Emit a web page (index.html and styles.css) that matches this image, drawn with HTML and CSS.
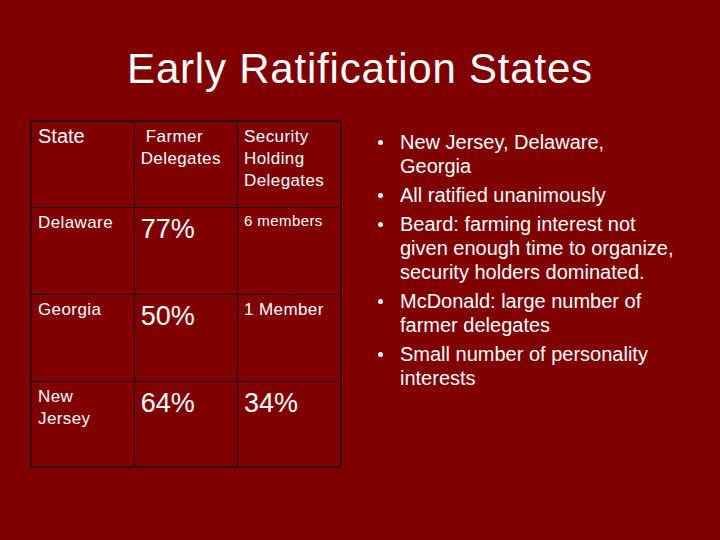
FILE: index.html
```html
<!DOCTYPE html>
<html>
<head>
<meta charset="utf-8">
<link rel="stylesheet" href="styles.css">
</head>
<body>
<div class="slide">
  <h1 class="title">Early Ratification States</h1>
  <div class="content">
    <table class="data">
      <tr class="r-head">
        <td class="c1 t20">State</td>
        <td class="c2 t16">&nbsp;Farmer<br>Delegates</td>
        <td class="c3 t16">Security<br>Holding<br>Delegates</td>
      </tr>
      <tr class="r-body">
        <td class="t16">Delaware</td>
        <td class="pct">77%</td>
        <td class="t14">6 members</td>
      </tr>
      <tr class="r-body">
        <td class="t16">Georgia</td>
        <td class="pct">50%</td>
        <td class="t16">1 Member</td>
      </tr>
      <tr class="r-last">
        <td class="t16">New<br>Jersey</td>
        <td class="pct">64%</td>
        <td class="pct">34%</td>
      </tr>
    </table>
    <ul class="bullets">
      <li>New Jersey, Delaware, Georgia</li>
      <li>All ratified unanimously</li>
      <li>Beard: farming interest not given enough time to organize, security holders dominated.</li>
      <li>McDonald: large number of farmer delegates</li>
      <li>Small number of personality interests</li>
    </ul>
  </div>
</div>
</body>
</html>
```

FILE: styles.css
```css
html, body {
  margin: 0;
  padding: 0;
}
body {
  background: #800000;
  font-family: "Liberation Sans", Arial, sans-serif;
  color: #ffffff;
}
.slide {
  width: 720px;
  height: 540px;
  box-sizing: border-box;
  padding-top: 45px;
}
.title {
  margin: 0;
  font-weight: normal;
  font-size: 42px;
  letter-spacing: 0.8px;
  line-height: 48px;
  text-align: center;
}
.content {
  display: flex;
  align-items: flex-start;
  padding-left: 30px;
  margin-top: 27px;
}
.data {
  border-collapse: collapse;
  border: 2px solid #2e0000;
  width: 312px;
  flex: none;
}
.data td {
  border: 1px solid #1c0000;
  vertical-align: top;
  padding: 4px 4px 0 6px;
  box-sizing: border-box;
  line-height: 22px;
}
.r-head td { height: 86px; }
.r-body td { height: 87px; }
.r-last td { height: 86px; }
.c1 { width: 104px; }
.c2 { width: 104px; }
.c3 { width: 104px; }
.r-head .c1 { padding-top: 3px; }
.t14 { font-size: 15px; letter-spacing: 0.4px; line-height: 18px !important; }
.t16 { font-size: 17px; letter-spacing: 0.4px; }
.t20 { font-size: 20px; }
.pct { font-size: 27px; line-height: 30px !important; padding-top: 6px !important; }
.bullets {
  list-style: none;
  margin: 10px 0 0 36px;
  padding: 0;
  width: 300px;
  font-size: 20px;
  line-height: 24px;
}
.bullets li {
  position: relative;
  padding-left: 22px;
  width: 276px;
  margin-bottom: 5px;
}
.bullets li::before {
  content: "";
  position: absolute;
  left: 0;
  top: 10px;
  width: 5px;
  height: 5px;
  border-radius: 50%;
  background: #ffffff;
}
```
